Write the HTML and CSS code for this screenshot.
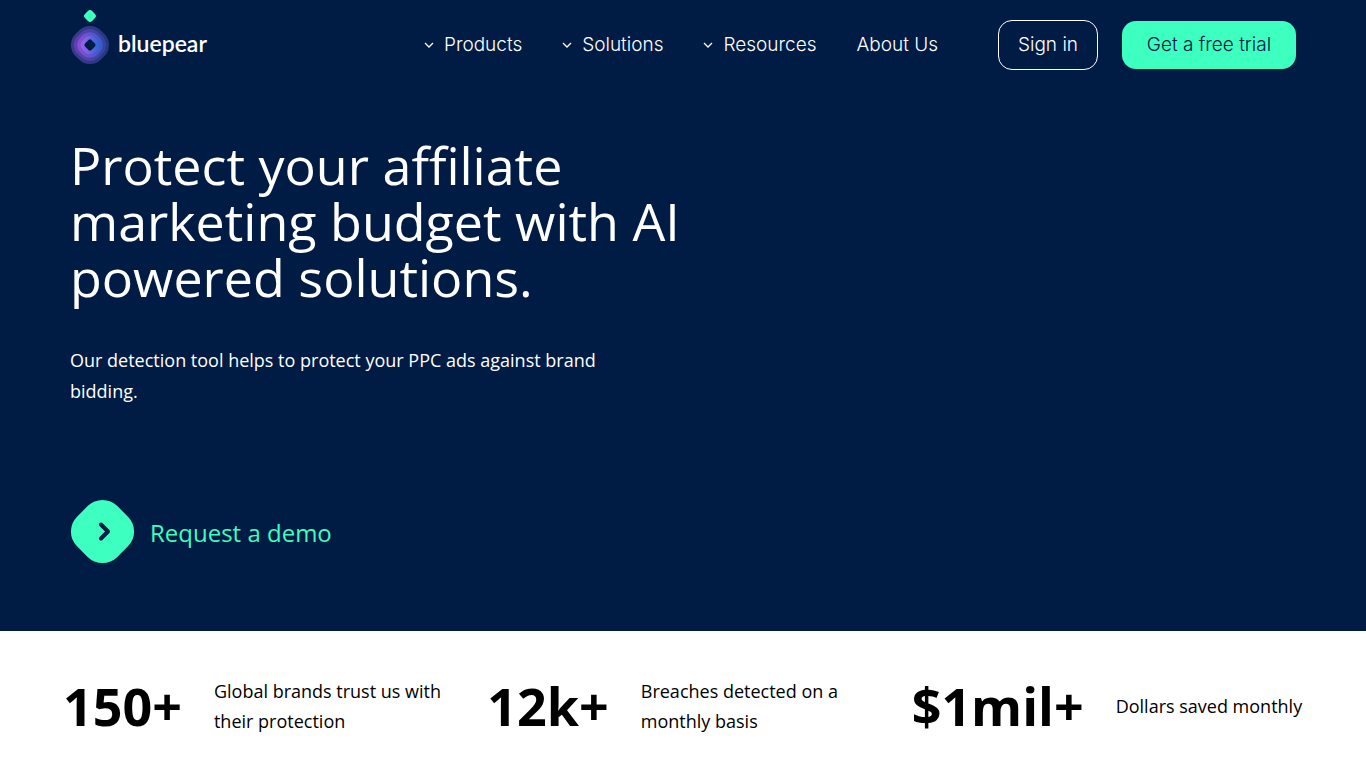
FILE: index.html
```html
<!DOCTYPE html>
<html lang="en">
<head>
<meta charset="utf-8">
<meta name="viewport" content="width=device-width, initial-scale=1">
<title>Bluepear</title>
<link rel="stylesheet" href="styles.css">
</head>
<body>
<div class="top">
  <header class="header">
    <a class="logo" href="#" aria-label="bluepear">
      <svg class="logo-mark" viewBox="0 0 40 56" width="40" height="56" aria-hidden="true">
        <defs>
          <linearGradient id="outer" x1="0" y1="1" x2="1" y2="0">
            <stop offset="0" stop-color="#3f3a90"/>
            <stop offset="1" stop-color="#22377c"/>
          </linearGradient>
          <linearGradient id="middle" x1="0" y1="1" x2="1" y2="0">
            <stop offset="0" stop-color="#6a3fb4"/>
            <stop offset="1" stop-color="#27469f"/>
          </linearGradient>
          <linearGradient id="inner" x1="0" y1="1" x2="1" y2="0">
            <stop offset="0" stop-color="#9a4bd6"/>
            <stop offset="1" stop-color="#2a5cc8"/>
          </linearGradient>
          <linearGradient id="core" x1="0" y1="1" x2="1" y2="0">
            <stop offset="0" stop-color="#a863ee"/>
            <stop offset="0.5" stop-color="#6a62e4"/>
            <stop offset="1" stop-color="#1668c8"/>
          </linearGradient>
        </defs>
        <rect x="15" y="1" width="10" height="10" rx="3" fill="#3cffc0" transform="rotate(45 20 6)"/>
        <rect x="2" y="17" width="36" height="36" rx="15.5" fill="url(#outer)" transform="rotate(45 20 35)"/>
        <rect x="5" y="20" width="30" height="30" rx="12.5" fill="url(#middle)" transform="rotate(45 20 35)"/>
        <rect x="8" y="23" width="24" height="24" rx="10" fill="url(#inner)" transform="rotate(45 20 35)"/>
        <rect x="11.5" y="26.5" width="17" height="17" rx="6.500" fill="url(#core)" transform="rotate(45 20 35)"/>
        <rect x="15.5" y="30.5" width="9" height="9" rx="2" fill="#001b44" transform="rotate(45 20 35)"/>
      </svg>
      <span class="logo-name">bluepear</span>
    </a>
    <nav class="nav">
      <a class="nav-link" href="#"><svg class="chevron" viewBox="0 0 10 6" width="10" height="6" aria-hidden="true"><path d="M1 1 5 5 9 1" stroke-width="1.3"/></svg>Products</a>
      <a class="nav-link" href="#"><svg class="chevron" viewBox="0 0 10 6" width="10" height="6" aria-hidden="true"><path d="M1 1 5 5 9 1" stroke-width="1.3"/></svg>Solutions</a>
      <a class="nav-link" href="#"><svg class="chevron" viewBox="0 0 10 6" width="10" height="6" aria-hidden="true"><path d="M1 1 5 5 9 1" stroke-width="1.3"/></svg>Resources</a>
      <a class="nav-link" href="#">About Us</a>
    </nav>
    <div class="actions">
      <a class="button button-outline" href="#">Sign in</a>
      <a class="button button-primary" href="#">Get a free trial</a>
    </div>
  </header>
  <main class="hero">
    <h1 class="title">Protect your affiliate marketing budget with AI powered solutions.</h1>
    <p class="lead">Our detection tool helps to protect your PPC ads against brand bidding.</p>
    <a class="demo" href="#">
      <svg viewBox="0 0 66 66" width="66" height="66" aria-hidden="true">
        <rect x="4" y="4" width="57" height="57" rx="21" fill="#3cffc0" transform="rotate(45 32.5 32.5)"/>
        <path d="M31 25.5 38 32.5 31 39.5" fill="none" stroke="#001b44" stroke-width="4" stroke-linecap="round" stroke-linejoin="round"/>
      </svg>
      <span>Request a demo</span>
    </a>
  </main>
</div>
<section class="stats">
  <div class="stat"><strong class="stat-value">150+</strong><p class="stat-text">Global brands trust us with their protection</p></div>
  <div class="stat"><strong class="stat-value">12k+</strong><p class="stat-text">Breaches detected on a monthly basis</p></div>
  <div class="stat"><strong class="stat-value">$1mil+</strong><p class="stat-text">Dollars saved monthly</p></div>
</section>
</body>
</html>
```
FILE: styles.css
```css
* { box-sizing: border-box; }
body {
  margin: 0;
  background: #fff;
  color: #000;
  font-family: "Open Sans", "Noto Sans", sans-serif;
  font-size: 18px;
}
h1, p { margin: 0; }
a { color: inherit; text-decoration: none; }
.top {
  background: #001b44;
  color: #fff;
  padding: 0 70px 66px;
}
.header {
  display: flex;
  align-items: center;
  height: 90px;
  font-family: Inter, "Open Sans", sans-serif;
  font-size: 19px;
  font-weight: 300;
  line-height: 24px;
}
.logo {
  display: flex;
  align-items: center;
  gap: 8px;
  margin-right: auto;
}
.logo-mark { margin-bottom: 14px; }
.logo-name {
  padding-bottom: 4px;
  font-family: Lato, sans-serif;
  font-size: 23px;
  font-weight: 600;
}
.nav {
  display: flex;
  gap: 40px;
  padding-bottom: 1px;
}
.nav-link {
  display: flex;
  align-items: center;
  gap: 10px;
}
.chevron {
  fill: none;
  stroke: currentColor;
}
.actions {
  display: flex;
  align-items: center;
  gap: 24px;
  margin-left: 60px;
}
.button {
  padding: 12px 19px;
  border-radius: 14px;
  text-align: center;
}
.button-outline { border: 1px solid #fff; }
.button-primary {
  min-width: 174px;
  background: #3cffc0;
  color: #001b44;
}
.hero { padding-top: 47px; }
.title {
  max-width: 640px;
  font-size: 52px;
  font-weight: 400;
  line-height: 56px;
}
.lead {
  max-width: 560px;
  margin-top: 40px;
  line-height: 31px;
}
.demo {
  display: inline-flex;
  align-items: center;
  gap: 14px;
  margin-top: 92px;
  color: #3cffc0;
  font-size: 24px;
  vertical-align: top;
}
.stats {
  display: grid;
  grid-template-columns: repeat(3, 1fr);
  padding: 45px 30px 45px 63px;
}
.stat {
  display: flex;
  align-items: center;
  gap: 32px;
}
.stat-value {
  font-size: 52px;
  line-height: 60px;
}
.stat-text {
  max-width: 236px;
  line-height: 30px;
}
```
